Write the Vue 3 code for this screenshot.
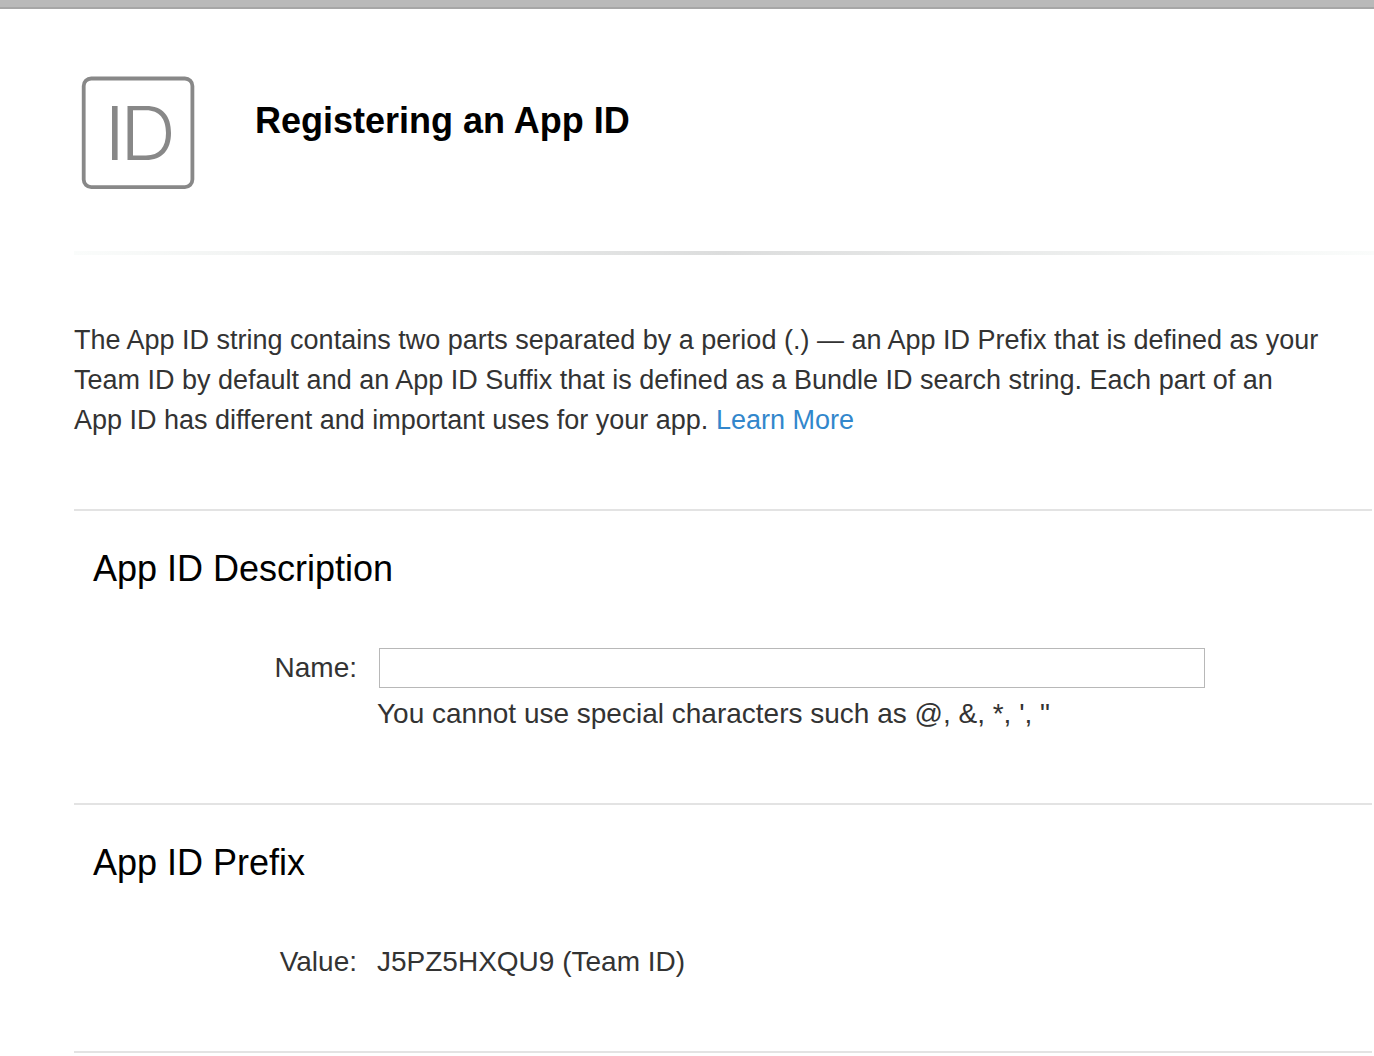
<script setup>
import { ref } from 'vue'

const name = ref('')
</script>

<template>
  <div class="page">
    <div class="topbar"></div>
    <main class="content">
      <header class="heading">
        <svg class="badge" viewBox="0 0 114 114" aria-hidden="true">
          <rect x="2.700" y="2.500" width="108.700" height="108.600" rx="7.500" fill="none" stroke="#888" stroke-width="3.800" />
          <path d="M31 30H36.600V84H31Z" fill="#888" />
          <path fill-rule="evenodd" d="M46.500 30H65C82 30 90 40 90 57S81 84 65 84H46.500ZM52 34.300V79.500H65C78.500 79.500 85 71 85 57S78.500 34.300 65 34.300Z" fill="#888" />
        </svg>
        <h1>Registering an App ID</h1>
      </header>
      <div class="divider"></div>
      <p class="intro">
        The App ID string contains two parts separated by a period (.) — an App ID Prefix that is defined as your<br>
        Team ID by default and an App ID Suffix that is defined as a Bundle ID search string. Each part of an<br>
        App ID has different and important uses for your app. <a href="#">Learn More</a>
      </p>
      <section class="block description">
        <h2>App ID Description</h2>
        <div class="row">
          <label for="name">Name:</label>
          <input id="name" v-model="name" type="text" aria-describedby="name-hint">
        </div>
        <p id="name-hint" class="hint">You cannot use special characters such as @, &amp;, *, ', "</p>
      </section>
      <section class="block prefix">
        <h2>App ID Prefix</h2>
        <dl class="row">
          <dt>Value:</dt>
          <dd>J5PZ5HXQU9 (Team ID)</dd>
        </dl>
      </section>
      <div class="end"></div>
    </main>
  </div>
</template>

<style>
body {
  margin: 0;
  background: #fff;
}
</style>

<style scoped>
.page {
  font-family: "Liberation Sans", Arial, sans-serif;
  font-size: 28px;
  line-height: 40px;
  color: #333;
}
.topbar {
  box-sizing: border-box;
  height: 9px;
  background: #b9b9b9;
  border-bottom: 2px solid #a6a6a6;
}
.content {
  padding-left: 74px;
}
.heading {
  display: flex;
  align-items: flex-start;
  padding: 67px 0 61px 7px;
}
.badge {
  width: 114px;
  height: 114px;
  flex: none;
}
h1 {
  margin: 24px 0 0 60px;
  font-size: 36px;
  line-height: 42px;
  color: #000;
}
.divider {
  height: 4px;
  background: linear-gradient(to right, #fafcfb, #dcdddd 50%, #fafcfb);
}
.intro {
  margin: 65px 0 69px;
  font-size: 27px;
}
a {
  color: #3287cc;
  text-decoration: none;
}
.block {
  border-top: 2px solid #e3e3e3;
  margin-right: 2px;
  padding: 37px 0 0 19px;
}
.description {
  padding-bottom: 69px;
}
.prefix {
  padding-bottom: 69px;
}
h2 {
  margin: 0 0 58px;
  font-size: 36px;
  line-height: 42px;
  font-weight: 400;
  color: #000;
}
.row {
  display: flex;
  margin: 0;
}
label,
dt {
  width: 264px;
  flex: none;
  text-align: right;
}
dd {
  margin: 0 0 0 20px;
}
input {
  box-sizing: border-box;
  flex: 1;
  min-width: 0;
  height: 40px;
  margin: 0 167px 0 22px;
  padding: 0 8px;
  border: 1px solid #b8b8b8;
  border-radius: 0;
  background: #fff;
  font: inherit;
}
.hint {
  margin: 6px 0 0 284px;
}
.end {
  height: 2px;
  margin-right: 2px;
  background: #e3e3e3;
}
</style>
